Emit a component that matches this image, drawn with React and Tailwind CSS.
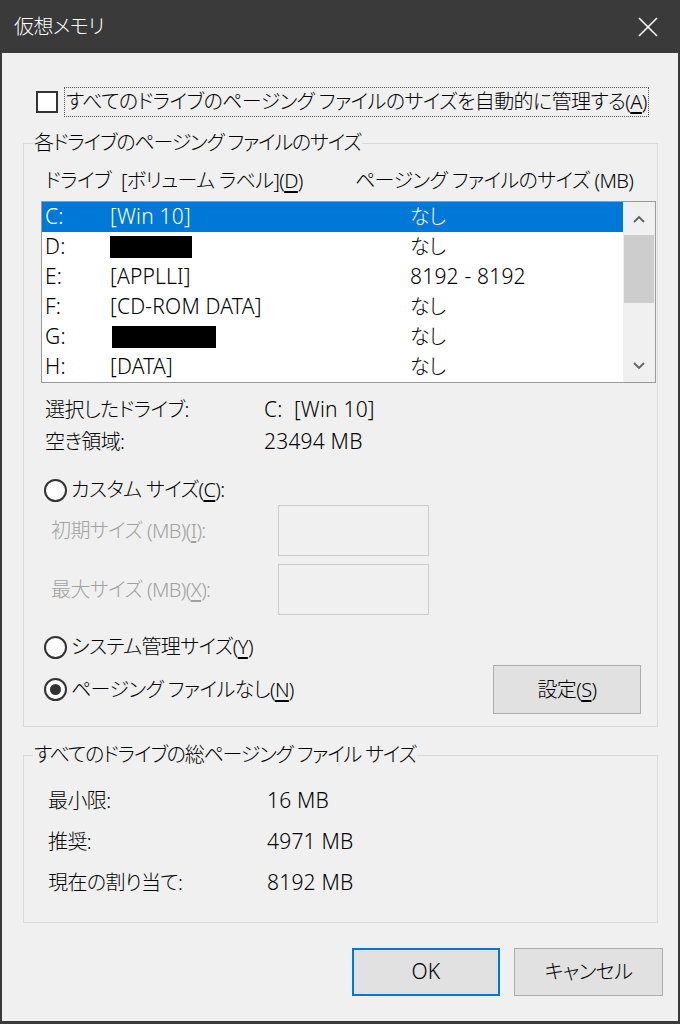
import React from "react"

const U = ({ children }) => <span className="underline underline-offset-[3px]">{children}</span>

// 英数字は少し大きめに(Yu Gothic UI の欧文幅に寄せる)
const Lat = ({ children }) => <span className="text-[21px] tracking-[0.2px]">{children}</span>

function Radio({ checked }) {
  return (
    <div className="w-[23px] h-[23px] rounded-full border-2 border-[#333] bg-white flex items-center justify-center shrink-0">
      {checked && <div className="w-[11px] h-[11px] rounded-full bg-[#333]" />}
    </div>
  )
}

const drives = [
  { d: "C:", label: "[Win 10]", size: "なし", sel: true },
  { d: "D:", redact: "w-[82px] h-[22px]", size: "なし" },
  { d: "E:", label: "[APPLLI]", size: "8192 - 8192", num: true },
  { d: "F:", label: "[CD-ROM DATA]", size: "なし" },
  { d: "G:", redact: "w-[104px] h-[22px] ml-[2px]", size: "なし" },
  { d: "H:", label: "[DATA]", size: "なし" },
]

export default function App() {
  return (
    <div className="w-[680px] h-[1024px] bg-[#3a3a3a] flex flex-col text-[20px] tracking-[-0.6px] font-light text-black [font-family:'Noto_Sans','Noto_Sans_CJK_JP',sans-serif] [font-feature-settings:'palt']">
      {/* タイトルバー */}
      <div className="h-[53px] shrink-0 flex items-center justify-between pl-[14px] pr-[22px] text-white">
        <span className="text-[20px]">仮想メモリ</span>
        <svg width="20" height="20" viewBox="0 0 20 20" stroke="white" strokeWidth="1.6" fill="none">
          <path d="M1 1 L19 19 M19 1 L1 19" />
        </svg>
      </div>

      <div className="flex-1 mx-[2px] mb-[3px] bg-[#f0f0f0] flex flex-col">
        {/* 自動管理 */}
        <div className="mt-[34px] ml-[34px] h-[30px] flex items-center">
          <div className="w-[22px] h-[22px] border-2 border-[#333] bg-white shrink-0" />
          <div className="ml-[6px] h-[30px] flex items-center border border-dotted border-[#555] px-[1px]">
            すべてのドライブのページング ファイルのサイズを自動的に管理する(<U>A</U>)
          </div>
        </div>

        {/* 各ドライブ */}
        <fieldset className="mt-[13px] ml-[21px] w-[635px] border border-[#d9d9d9] pb-[12px]">
          <legend className="ml-[9px] px-[1px] leading-[26px] tracking-[-1.2px]">各ドライブのページング ファイルのサイズ</legend>
          <div className="mt-[12px] pl-[21px] h-[26px] flex items-center">
            <span className="w-[76px]">ドライブ</span>
            <span className="w-[234px]">[ボリューム ラベル](<U>D</U>)</span>
            <span>ページング ファイルのサイズ (MB)</span>
          </div>
          <div className="mt-[7px] ml-[17px] w-[615px] h-[182px] border border-[#9a9a9a] bg-white flex">
            <div className="w-[581px] flex flex-col overflow-hidden">
              {drives.map((r) => (
                <div
                  key={r.d}
                  className={`h-[30px] shrink-0 flex items-center pl-[3px] ${r.sel ? "bg-[#0078d7] text-white" : ""}`}
                >
                  <span className="w-[65px]"><Lat>{r.d}</Lat></span>
                  <span className="w-[300px] flex items-center">
                    {r.redact ? <span className={`bg-black ${r.redact}`} /> : <Lat>{r.label}</Lat>}
                  </span>
                  <span>{r.num ? <Lat>{r.size}</Lat> : r.size}</span>
                </div>
              ))}
            </div>
            <div className="w-[32px] bg-[#f0f0f0] flex flex-col">
              <div className="h-[33px] flex items-center justify-center">
                <svg width="12" height="8" viewBox="0 0 12 8" fill="none" stroke="#606060" strokeWidth="1.8">
                  <path d="M1 7 L6 2 L11 7" />
                </svg>
              </div>
              <div className="h-[68px] mx-[1px] bg-[#cdcdcd]" />
              <div className="flex-1" />
              <div className="h-[32px] flex items-center justify-center">
                <svg width="12" height="8" viewBox="0 0 12 8" fill="none" stroke="#606060" strokeWidth="1.8">
                  <path d="M1 1 L6 6 L11 1" />
                </svg>
              </div>
            </div>
          </div>

          <div className="mt-[11px] pl-[21px] h-[32px] flex items-center">
            <span className="w-[219px]">選択したドライブ:</span>
            <Lat>C:&nbsp;&nbsp;[Win 10]</Lat>
          </div>
          <div className="pl-[21px] h-[32px] flex items-center">
            <span className="w-[219px]">空き領域:</span>
            <Lat>23494 MB</Lat>
          </div>

          <div className="mt-[17px] pl-[20px] h-[30px] flex items-center gap-[4px]">
            <Radio />
            <span>カスタム サイズ(<U>C</U>):</span>
          </div>
          <div className="h-[51px] flex items-center">
            <span className="w-[254px] pl-[27px] text-[#a0a0a0]">初期サイズ (MB)(<U>I</U>):</span>
            <div className="w-[151px] h-[51px] border border-[#cccccc]" />
          </div>
          <div className="mt-[8px] h-[51px] flex items-center">
            <span className="w-[254px] pl-[27px] text-[#a0a0a0]">最大サイズ (MB)(<U>X</U>):</span>
            <div className="w-[151px] h-[51px] border border-[#cccccc]" />
          </div>

          <div className="mt-[17px] pl-[20px] h-[30px] flex items-center gap-[4px]">
            <Radio />
            <span>システム管理サイズ(<U>Y</U>)</span>
          </div>
          <div className="mt-[3px] pl-[20px] h-[49px] flex items-center">
            <Radio checked />
            <span className="ml-[4px]">ページング ファイルなし(<U>N</U>)</span>
            <button className="ml-auto mr-[16px] w-[148px] h-[49px] bg-[#e1e1e1] border border-[#adadad]">
              設定(<U>S</U>)
            </button>
          </div>
        </fieldset>

        {/* 総ページング ファイル サイズ */}
        <fieldset className="mt-[15px] ml-[21px] w-[635px] border border-[#d9d9d9] pb-[19px]">
          <legend className="ml-[9px] px-[1px] leading-[26px] tracking-[-1.2px]">すべてのドライブの総ページング ファイル サイズ</legend>
          <div className="mt-[12px]">
            {[
              ["最小限:", "16 MB"],
              ["推奨:", "4971 MB"],
              ["現在の割り当て:", "8192 MB"],
            ].map(([k, v]) => (
              <div key={k} className="h-[41px] flex items-center pl-[24px]">
                <span className="w-[219px]">{k}</span>
                <Lat>{v}</Lat>
              </div>
            ))}
          </div>
        </fieldset>

        <div className="mt-[25px] pr-[15px] flex justify-end gap-[14px]">
          <button className="w-[148px] h-[48px] bg-[#e1e1e1] border-2 border-[#0078d7]"><Lat>OK</Lat></button>
          <button className="w-[149px] h-[48px] bg-[#e1e1e1] border border-[#adadad]">キャンセル</button>
        </div>
      </div>
    </div>
  )
}
